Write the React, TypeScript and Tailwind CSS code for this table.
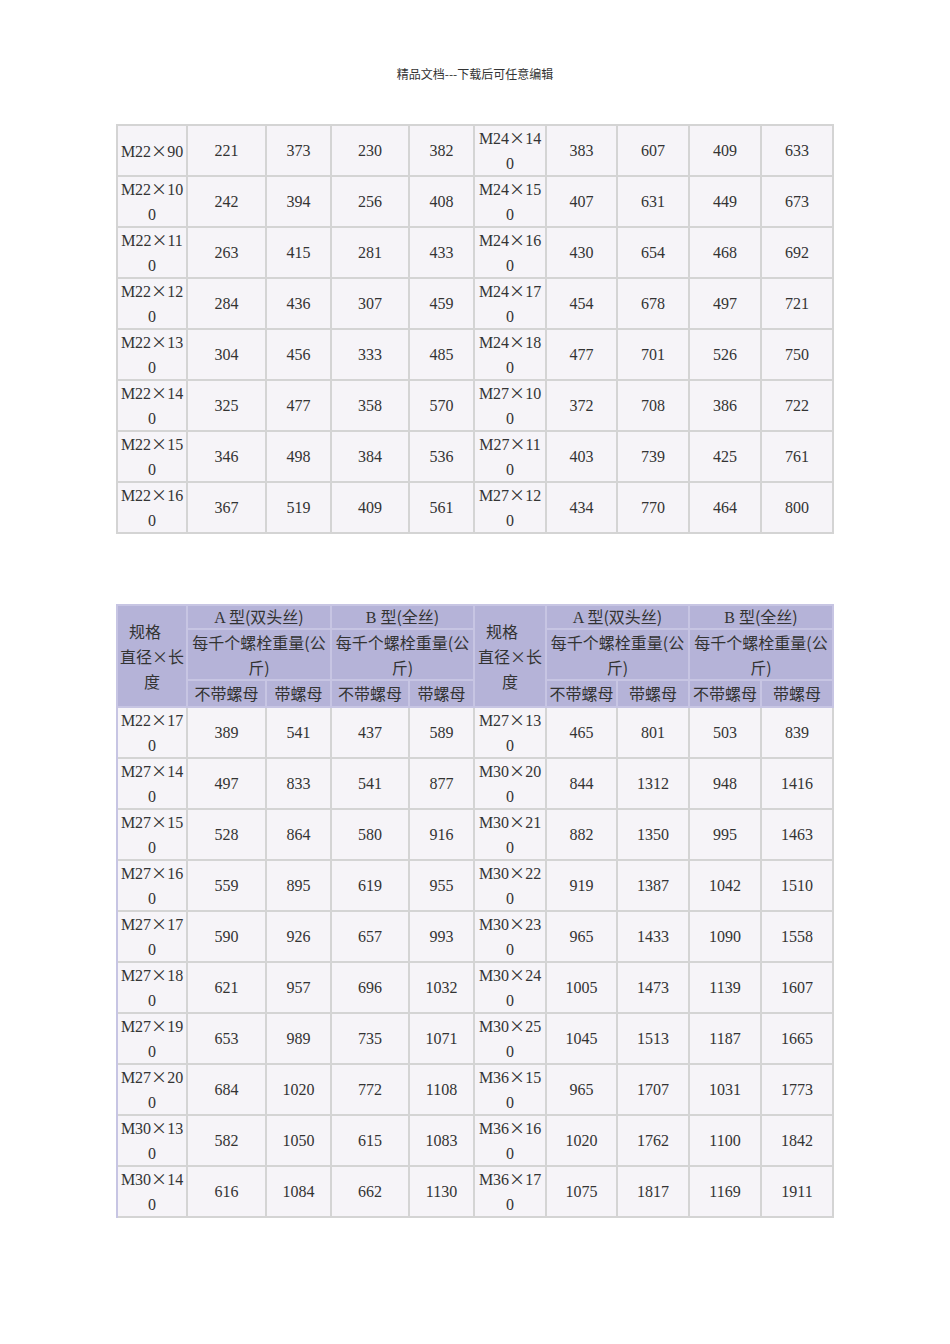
const COLS = "grid-cols-[70px_79px_65px_78px_65px_72px_71px_72px_72px_72px]";

type Row = [string, number, number, number, number, string, number, number, number, number];

const TABLE_ONE: Row[] = [
  ["M22×90", 221, 373, 230, 382, "M24×14|0", 383, 607, 409, 633],
  ["M22×10|0", 242, 394, 256, 408, "M24×15|0", 407, 631, 449, 673],
  ["M22×11|0", 263, 415, 281, 433, "M24×16|0", 430, 654, 468, 692],
  ["M22×12|0", 284, 436, 307, 459, "M24×17|0", 454, 678, 497, 721],
  ["M22×13|0", 304, 456, 333, 485, "M24×18|0", 477, 701, 526, 750],
  ["M22×14|0", 325, 477, 358, 570, "M27×10|0", 372, 708, 386, 722],
  ["M22×15|0", 346, 498, 384, 536, "M27×11|0", 403, 739, 425, 761],
  ["M22×16|0", 367, 519, 409, 561, "M27×12|0", 434, 770, 464, 800],
];

const TABLE_TWO: Row[] = [
  ["M22×17|0", 389, 541, 437, 589, "M27×13|0", 465, 801, 503, 839],
  ["M27×14|0", 497, 833, 541, 877, "M30×20|0", 844, 1312, 948, 1416],
  ["M27×15|0", 528, 864, 580, 916, "M30×21|0", 882, 1350, 995, 1463],
  ["M27×16|0", 559, 895, 619, 955, "M30×22|0", 919, 1387, 1042, 1510],
  ["M27×17|0", 590, 926, 657, 993, "M30×23|0", 965, 1433, 1090, 1558],
  ["M27×18|0", 621, 957, 696, 1032, "M30×24|0", 1005, 1473, 1139, 1607],
  ["M27×19|0", 653, 989, 735, 1071, "M30×25|0", 1045, 1513, 1187, 1665],
  ["M27×20|0", 684, 1020, 772, 1108, "M36×15|0", 965, 1707, 1031, 1773],
  ["M30×13|0", 582, 1050, 615, 1083, "M36×16|0", 1020, 1762, 1100, 1842],
  ["M30×14|0", 616, 1084, 662, 1130, "M36×17|0", 1075, 1817, 1169, 1911],
];

// header columns for the two halves of the second table
const HALVES = [
  { spec: "col-start-1", a: "col-start-2", b: "col-start-4", cells: ["col-start-2", "col-start-3", "col-start-4", "col-start-5"] },
  { spec: "col-start-6", a: "col-start-7", b: "col-start-9", cells: ["col-start-7", "col-start-8", "col-start-9", "col-start-10"] },
];

function SpecText({ value }: { value: string }) {
  return (
    <span className="flex flex-col items-center whitespace-nowrap">
      {value.split("|").map((line, i) => {
        const [a, b] = line.split("×");
        return (
          <span key={i}>
            {b === undefined ? (
              a
            ) : (
              <>
                {a}
                <span className="font-['Noto_Sans_CJK_SC',sans-serif]">×</span>
                {b}
              </>
            )}
          </span>
        );
      })}
    </span>
  );
}

function DataRows({ rows }: { rows: Row[] }) {
  return (
    <>
      {rows.map((row, r) =>
        row.map((v, c) => (
          <div
            key={`${r}-${c}`}
            className="flex h-[51px] items-center justify-center border-r-2 border-b-2 border-[#d4d4d4] bg-[#f6f4f8]"
          >
            {typeof v === "string" ? <SpecText value={v} /> : v}
          </div>
        )),
      )}
    </>
  );
}

function HeadCell({ className, children }: { className: string; children: React.ReactNode }) {
  return (
    <div
      className={`flex flex-col items-center justify-center border-r-2 border-b-2 border-[#c7c5e3] bg-[#b5b3d8] text-center ${className}`}
    >
      {children}
    </div>
  );
}

export default function App() {
  return (
    <div className="min-h-[1344px] w-[950px] bg-white text-[16px] leading-[25px] text-[#333] font-['Liberation_Serif','Noto_Sans_CJK_SC',serif]">
      <div className="pt-[65px] text-center text-[12px] leading-[18px] text-[#333] font-['Noto_Sans_CJK_SC',sans-serif]">
        精品文档---下载后可任意编辑
      </div>

      <div className={`ml-[116px] mt-[41px] grid w-[718px] ${COLS} border-t-2 border-l-2 border-[#d4d4d4]`}>
        <DataRows rows={TABLE_ONE} />
      </div>

      <div
        className={`ml-[116px] mt-[70px] grid w-[718px] ${COLS} grid-rows-[24px_51px_27px] border-t-2 border-l-2 border-[#c7c5e3] [&_.cjk]:font-['Noto_Sans_CJK_SC',sans-serif]`}
      >
        {HALVES.map((h) => (
          <HeadCell key={h.spec} className={`${h.spec} row-start-1 row-span-3`}>
            <span className="cjk self-start pl-[11px]">规格</span>
            <span className="cjk">直径×长</span>
            <span className="cjk">度</span>
          </HeadCell>
        ))}
        {HALVES.map((h) => (
          <HeadCell key={`a-${h.a}`} className={`${h.a} col-span-2 row-start-1`}>
            <span>
              A <span className="cjk">型(双头丝)</span>
            </span>
          </HeadCell>
        ))}
        {HALVES.map((h) => (
          <HeadCell key={`b-${h.b}`} className={`${h.b} col-span-2 row-start-1`}>
            <span>
              B <span className="cjk">型(全丝)</span>
            </span>
          </HeadCell>
        ))}
        {HALVES.flatMap((h) => [h.a, h.b]).map((col) => (
          <HeadCell key={`w-${col}`} className={`${col} col-span-2 row-start-2`}>
            <span className="cjk">每千个螺栓重量(公</span>
            <span className="cjk">斤)</span>
          </HeadCell>
        ))}
        {HALVES.flatMap((h) => h.cells).map((col, i) => (
          <HeadCell key={`n-${col}`} className={`${col} row-start-3`}>
            <span className="cjk">{i % 2 === 0 ? "不带螺母" : "带螺母"}</span>
          </HeadCell>
        ))}

        <DataRows rows={TABLE_TWO} />
      </div>
    </div>
  );
}
